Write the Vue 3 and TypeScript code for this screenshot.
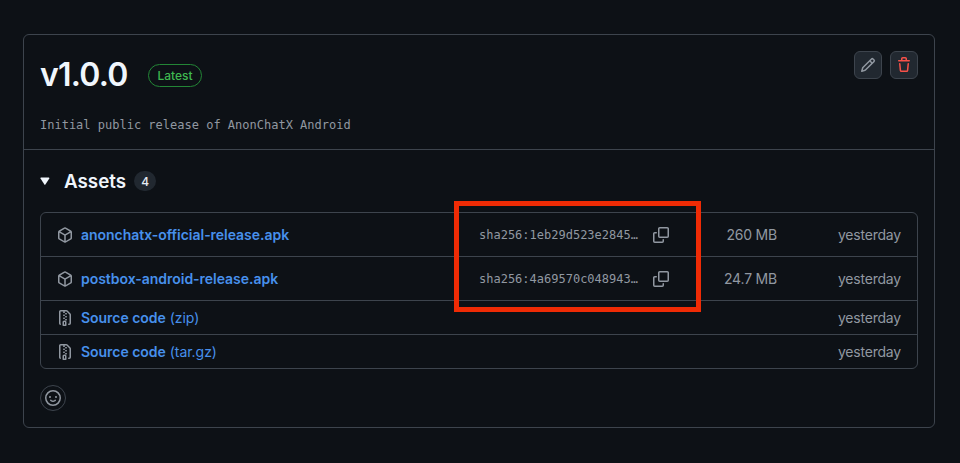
<script setup lang="ts">
interface Asset {
  name: string
  suffix?: string
  kind: 'package' | 'zip'
  sha?: string
  size?: string
}
const assets: Asset[] = [
  { name: 'anonchatx-official-release.apk', kind: 'package', sha: 'sha256:1eb29d523e2845…', size: '260 MB' },
  { name: 'postbox-android-release.apk', kind: 'package', sha: 'sha256:4a69570c048943…', size: '24.7 MB' },
  { name: 'Source code', suffix: '(zip)', kind: 'zip' },
  { name: 'Source code', suffix: '(tar.gz)', kind: 'zip' },
]
const icons: Record<string, string> = {
  package: 'm8.878.392 5.25 3.045c.54.314.872.89.872 1.514v6.098a1.75 1.75 0 0 1-.872 1.514l-5.25 3.045a1.75 1.75 0 0 1-1.756 0l-5.25-3.045A1.75 1.75 0 0 1 1 11.049V4.951c0-.624.332-1.201.872-1.514L7.122.392a1.75 1.75 0 0 1 1.756 0ZM7.875 1.69l-4.63 2.685L8 7.133l4.755-2.758-4.63-2.685a.248.248 0 0 0-.25 0ZM2.5 5.677v5.372c0 .09.047.171.125.216l4.625 2.683V8.432Zm6.25 8.271 4.625-2.683a.25.25 0 0 0 .125-.216V5.677L8.75 8.432Z',
  zip: 'M3.5 1.75v11.5c0 .09.048.173.126.217a.75.75 0 0 1-.752 1.298A1.748 1.748 0 0 1 2 13.25V1.75C2 .784 2.784 0 3.75 0h5.586c.464 0 .909.185 1.237.513l2.914 2.914c.329.328.513.773.513 1.237v8.586A1.75 1.75 0 0 1 12.25 15h-.5a.75.75 0 0 1 0-1.5h.5a.25.25 0 0 0 .25-.25V4.664a.25.25 0 0 0-.073-.177L9.513 1.573a.25.25 0 0 0-.177-.073H7.25a.75.75 0 0 1 0 1.5h-.5a.75.75 0 0 1 0-1.5h-3a.25.25 0 0 0-.25.25Zm3.75 8.75h.5c.966 0 1.75.784 1.75 1.75v3a.75.75 0 0 1-.75.75h-2.5a.75.75 0 0 1-.75-.75v-3c0-.966.784-1.75 1.75-1.75ZM6 5.25a.75.75 0 0 1 .75-.75h.5a.75.75 0 0 1 0 1.5h-.5A.75.75 0 0 1 6 5.25Zm.75 2.25h.5a.75.75 0 0 1 0 1.5h-.5a.75.75 0 0 1 0-1.5ZM8 6.75A.75.75 0 0 1 8.75 6h.5a.75.75 0 0 1 0 1.5h-.5A.75.75 0 0 1 8 6.75ZM8.75 3h.5a.75.75 0 0 1 0 1.5h-.5a.75.75 0 0 1 0-1.5ZM8 9.75A.75.75 0 0 1 8.75 9h.5a.75.75 0 0 1 0 1.5h-.5A.75.75 0 0 1 8 9.75Zm-1 2.5v2.25h1v-2.25a.25.25 0 0 0-.25-.25h-.5a.25.25 0 0 0-.25.25Z',
  copy: 'M0 6.75C0 5.784.784 5 1.75 5h1.5a.75.75 0 0 1 0 1.5h-1.5a.25.25 0 0 0-.25.25v7.5c0 .138.112.25.25.25h7.5a.25.25 0 0 0 .25-.25v-1.5a.75.75 0 0 1 1.5 0v1.5A1.75 1.75 0 0 1 9.25 16h-7.5A1.75 1.75 0 0 1 0 14.25ZM5 1.75C5 .784 5.784 0 6.75 0h7.5C15.216 0 16 .784 16 1.75v7.5A1.75 1.75 0 0 1 14.25 11h-7.5A1.75 1.75 0 0 1 5 9.25Zm1.75-.25a.25.25 0 0 0-.25.25v7.5c0 .138.112.25.25.25h7.5a.25.25 0 0 0 .25-.25v-7.5a.25.25 0 0 0-.25-.25Z',
  pencil: 'M11.013 1.427a1.75 1.75 0 0 1 2.474 0l1.086 1.086a1.75 1.75 0 0 1 0 2.474l-8.61 8.61c-.21.21-.47.364-.756.445l-3.251.93a.75.75 0 0 1-.927-.928l.929-3.25c.081-.286.235-.547.445-.758l8.61-8.61Zm.176 4.823L9.75 4.81l-6.286 6.287a.253.253 0 0 0-.064.108l-.558 1.953 1.953-.558a.253.253 0 0 0 .108-.064Zm1.238-3.763a.25.25 0 0 0-.354 0L10.811 3.75l1.439 1.44 1.263-1.263a.25.25 0 0 0 0-.354Z',
  trash: 'M11 1.75V3h2.25a.75.75 0 0 1 0 1.5H2.75a.75.75 0 0 1 0-1.5H5V1.75C5 .784 5.784 0 6.75 0h2.5C10.216 0 11 .784 11 1.75ZM4.496 6.675l.66 6.6a.25.25 0 0 0 .249.225h5.19a.25.25 0 0 0 .249-.225l.66-6.6a.75.75 0 0 1 1.492.149l-.66 6.6A1.748 1.748 0 0 1 10.595 15h-5.19a1.75 1.75 0 0 1-1.741-1.575l-.66-6.6a.75.75 0 1 1 1.492-.15ZM6.5 1.75V3h3V1.75a.25.25 0 0 0-.25-.25h-2.5a.25.25 0 0 0-.25.25Z',
  smiley: 'M8 0a8 8 0 1 1 0 16A8 8 0 0 1 8 0ZM1.5 8a6.5 6.5 0 1 0 13 0 6.5 6.5 0 0 0-13 0Zm3.82 1.636a.75.75 0 0 1 1.038.175l.007.009c.103.118.22.222.35.31.264.178.683.37 1.285.37.602 0 1.02-.192 1.285-.371.13-.088.247-.192.35-.31l.007-.008a.75.75 0 0 1 1.222.87l-.022-.015c.02.013.021.015.021.015v.001l-.001.002-.002.003-.005.007-.014.019a2.066 2.066 0 0 1-.184.213c-.16.166-.338.316-.53.445-.63.418-1.37.638-2.127.629-.946 0-1.652-.308-2.126-.63a3.331 3.331 0 0 1-.715-.657l-.014-.02-.005-.006-.002-.003v-.002h-.001l.613-.432-.614.43a.75.75 0 0 1 .183-1.044ZM12 7a1 1 0 1 1-2 0 1 1 0 0 1 2 0ZM5 8a1 1 0 1 1 0-2 1 1 0 0 1 0 2Z',
  triangle: 'M1 4.5a.6.6 0 0 0-.5.9l3.9 6.2a.6.6 0 0 0 1 0l3.9-6.2a.6.6 0 0 0-.5-.9Z',
}
</script>

<template>
  <div class="page">
    <section class="card">
      <header class="head">
        <div class="title-row">
          <h1 class="title">v1.0.0</h1>
          <span class="badge">Latest</span>
          <div class="actions">
            <button class="btn"><svg class="ico" viewBox="0 0 16 16"><path :d="icons.pencil" /></svg></button>
            <button class="btn danger"><svg class="ico" viewBox="0 0 16 16"><path :d="icons.trash" /></svg></button>
          </div>
        </div>
        <p class="desc">Initial public release of AnonChatX Android</p>
      </header>

      <div class="body">
        <div class="assets-head">
          <svg class="tri" viewBox="0 0 10 16"><path :d="icons.triangle" /></svg>
          <span class="assets-title">Assets</span>
          <span class="counter">4</span>
        </div>

        <ul class="list">
          <li v-for="a in assets" :key="a.name + a.suffix" class="row" :class="{ tall: a.kind === 'package' }">
            <div class="name-col">
              <svg class="ico" viewBox="0 0 16 16"><path :d="icons[a.kind]" /></svg>
              <span class="link"><b>{{ a.name }}</b>{{ a.suffix ? ' ' + a.suffix : '' }}</span>
            </div>
            <template v-if="a.sha">
              <code class="sha">{{ a.sha }}</code>
              <svg class="ico" viewBox="0 0 16 16"><path :d="icons.copy" /></svg>
              <span class="size">{{ a.size }}</span>
            </template>
            <span class="date">yesterday</span>
          </li>
        </ul>

        <button class="react"><svg class="ico" viewBox="0 0 16 16"><path :d="icons.smiley" /></svg></button>
      </div>

      <div class="annotation"></div>
    </section>
  </div>
</template>

<style>
html, body { margin: 0; background: #0d1116; }
</style>

<style scoped>
.page {
  height: 463px;
  box-sizing: border-box;
  padding: 34px 25px 0 23px;
  background: #0d1116;
  font-family: Inter, "Liberation Sans", sans-serif;
  color: #9198a1;
  overflow: hidden;
}
.card {
  position: relative;
  height: 394px;
  box-sizing: border-box;
  border: 1px solid #3d444d;
  border-radius: 6px;
}
.head {
  height: 115px;
  box-sizing: border-box;
  padding: 16px 16px 0;
  border-bottom: 1px solid #3d444d;
}
.title-row {
  display: flex;
  align-items: center;
  height: 48px;
}
.title {
  margin: 0;
  font-size: 32px;
  line-height: 48px;
  font-weight: 600;
  color: #f0f6fc;
  letter-spacing: -0.8px;
}
.badge {
  margin-left: 21px;
  height: 23px;
  box-sizing: border-box;
  padding: 0 8px;
  display: flex;
  align-items: center;
  border: 1px solid #238636;
  border-radius: 12px;
  font-size: 12px;
  font-weight: 500;
  color: #3fb950;
}
.actions {
  margin-left: auto;
  display: flex;
  gap: 8px;
  align-self: flex-start;
}
.btn {
  width: 28px;
  height: 28px;
  padding: 0;
  display: flex;
  align-items: center;
  justify-content: center;
  background: #212830;
  border: 1px solid #3d444d;
  border-radius: 6px;
  color: #9198a1;
}
.btn.danger { color: #f85149; }
.ico {
  width: 16px;
  height: 16px;
  flex: none;
  fill: currentColor;
}
.desc {
  margin: 17px 0 0;
  font-family: "DejaVu Sans Mono", "Liberation Mono", monospace;
  font-size: 12px;
  line-height: 18px;
  color: #9198a1;
}
.body { padding: 0 16px; }
.assets-head {
  display: flex;
  align-items: center;
  height: 62px;
}
.tri {
  width: 10px;
  height: 16px;
  fill: #f0f6fc;
}
.assets-title {
  margin-left: 14px;
  font-size: 18.8px;
  font-weight: 600;
  color: #f0f6fc;
}
.counter {
  margin-left: 8px;
  width: 22px;
  height: 20px;
  display: flex;
  align-items: center;
  justify-content: center;
  border-radius: 10px;
  background: #212830;
  font-size: 12px;
  font-weight: 500;
  color: #e6edf3;
}
.list {
  margin: 0;
  padding: 0;
  list-style: none;
  border: 1px solid #3d444d;
  border-radius: 6px;
}
.row {
  display: flex;
  align-items: center;
  height: 34px;
  box-sizing: border-box;
  padding: 0 16px;
  font-size: 14px;
  border-top: 1px solid #3d444d;
}
.row:first-child { border-top: none; height: 43px; }
.row.tall:not(:first-child) { height: 44px; }
.name-col {
  width: 422px;
  flex: none;
  display: flex;
  align-items: center;
  gap: 8px;
}
.link { color: #4790ec; letter-spacing: -0.03px; }
.link b { font-weight: 600; }
.sha {
  width: 174px;
  flex: none;
  font-family: "DejaVu Sans Mono", "Liberation Mono", monospace;
  font-size: 12px;
  color: #9198a1;
}
.size {
  width: 108px;
  flex: none;
  text-align: right;
  letter-spacing: -0.2px;
}
.date {
  margin-left: auto;
  text-align: right;
  letter-spacing: -0.2px;
}
.react {
  margin-top: 16px;
  width: 26px;
  height: 26px;
  padding: 0;
  display: flex;
  align-items: center;
  justify-content: center;
  background: transparent;
  border: 1px solid #3d444d;
  border-radius: 50%;
  color: #9198a1;
}
.annotation {
  position: absolute;
  left: 430px;
  top: 166px;
  width: 247px;
  height: 111px;
  box-sizing: border-box;
  border: 5px solid #ef2b05;
}
</style>
